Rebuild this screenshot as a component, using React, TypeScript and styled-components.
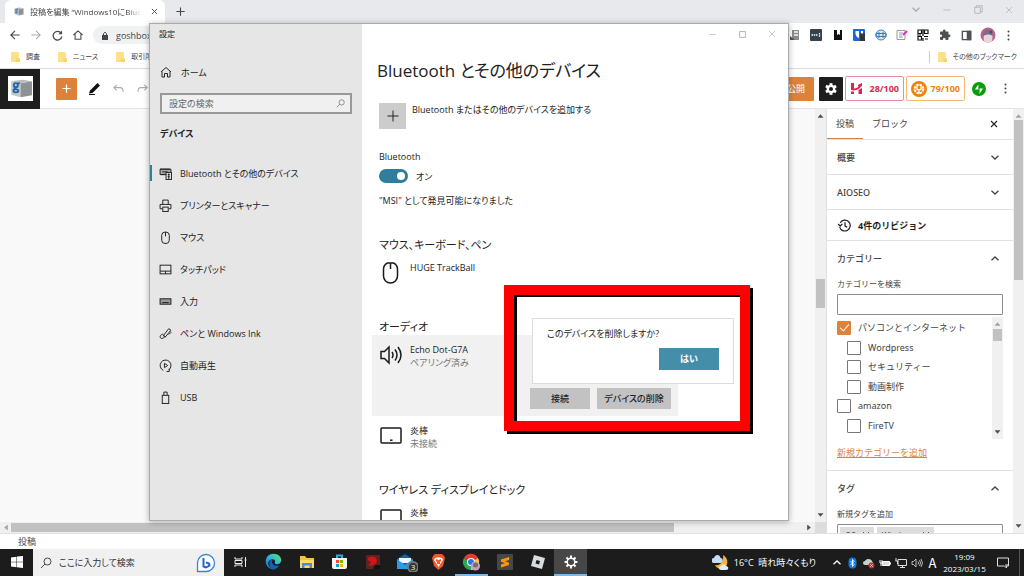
import React from "react";
import styled, { createGlobalStyle } from "styled-components";

const ui = '"Open Sans", "Noto Sans CJK JP", sans-serif';
const wp = '"Noto Sans", "Noto Sans CJK JP", sans-serif';

const Global = createGlobalStyle`
  *, *::before, *::after { box-sizing: border-box; }
  body { margin: 0; font-family: ${ui}; font-size: 9px; color: #222; overflow: hidden; }
  button, input { font: inherit; color: inherit; }
  button { border: 0; padding: 0; background: none; cursor: pointer; }
  h1, h2, p, ul { margin: 0; padding: 0; }
  ul { list-style: none; }
  svg { display: block; flex: none; }
`;

type IconProps = {
  w?: number;
  h?: number;
  box?: string;
  stroke?: string;
  sw?: number;
  fill?: string;
  children: React.ReactNode;
};
const Icon = ({ w = 12, h = w, box = "0 0 24 24", stroke = "currentColor", sw = 2, fill = "none", children }: IconProps) => (
  <svg width={w} height={h} viewBox={box} fill={fill} stroke={stroke} strokeWidth={sw} aria-hidden="true">
    {children}
  </svg>
);

/* ---------- page ---------- */

const Screen = styled.div`
  position: relative;
  display: flex;
  flex-direction: column;
  height: 100vh;
  background: #fff;
  overflow: hidden;
`;

/* ---------- browser chrome ---------- */

const TabStrip = styled.div`
  display: flex;
  align-items: center;
  height: 23px;
  flex: none;
  padding-left: 5px;
  background: #e7e9ed;
  color: #444;
`;
const Tab = styled.div`
  display: flex;
  align-items: center;
  gap: 6px;
  align-self: stretch;
  width: 160px;
  padding: 0 4px 0 8px;
  background: #fff;
  border-radius: 6px 6px 0 0;
`;
const TabTitle = styled.span`
  flex: 1;
  overflow: hidden;
  white-space: nowrap;
  font-size: 8px;
  line-height: 14px;
  font-feature-settings: "palt";
  mask-image: linear-gradient(90deg, #000 88%, transparent);
`;
const IconButton = styled.button<{ $dim?: boolean }>`
  display: flex;
  align-items: center;
  justify-content: center;
  width: 14px;
  height: 14px;
  flex: none;
  color: ${(p) => (p.$dim ? "#a8abaf" : "#45484c")};
`;
const NewTab = styled(IconButton)`
  margin-left: 8px;
`;
const BrowserCaption = styled.div`
  display: flex;
  gap: 17px;
  margin: 0 8px 4px auto;
`;
const Toolbar = styled.div`
  display: flex;
  align-items: center;
  height: 24px;
  flex: none;
  padding: 0 8px;
`;
const NavButtons = styled.div`
  display: flex;
  gap: 7px;
`;
const Address = styled.div`
  display: flex;
  align-items: center;
  gap: 7px;
  flex: 1;
  height: 18px;
  margin: 0 90px 0 8px;
  padding-left: 8px;
  border-radius: 9px;
  background: #eff1f3;
  color: #444;
`;
const AddressInput = styled.input`
  flex: 1;
  min-width: 0;
  padding: 0;
  border: 0;
  background: none;
`;
const Extensions = styled.div`
  display: flex;
  justify-content: space-between;
  width: 228px;
  flex: none;
`;
const Bookmarks = styled.div`
  display: flex;
  align-items: center;
  gap: 17px;
  height: 22px;
  flex: none;
  padding: 0 7px 2px 10px;
  border-bottom: 1px solid #dadce0;
`;
const Bookmark = styled.a<{ $end?: boolean }>`
  display: flex;
  align-items: center;
  gap: 6px;
  margin-left: ${(p) => (p.$end ? "auto" : "0")};
  padding-left: ${(p) => (p.$end ? "7px" : "0")};
  border-left: ${(p) => (p.$end ? "1px solid #ccc" : "0")};
  color: #444;
  font-size: 7px;
  line-height: 12px;
  text-decoration: none;
  white-space: nowrap;
  font-feature-settings: "palt";
`;

/* ---------- editor ---------- */

const EditorHeader = styled.header`
  display: flex;
  align-items: center;
  height: 40px;
  flex: none;
  border-bottom: 1px solid #e4e4e4;
  font-family: ${wp};
`;
const SiteLogo = styled.a`
  display: grid;
  place-items: center;
  width: 40px;
  height: 40px;
  background: #1e1e1e;
`;
const Tools = styled.div`
  display: flex;
  align-items: center;
  gap: 10px;
  margin-left: 16px;
`;
const AddBlock = styled.button`
  display: grid;
  place-items: center;
  width: 21px;
  height: 22px;
  border-radius: 1px;
  background: #dd823b;
  color: #fff;
`;
const Actions = styled.div`
  display: flex;
  align-items: center;
  gap: 2px;
  margin-left: auto;
  padding-right: 12px;
`;
const Publish = styled.button`
  width: 36px;
  height: 24px;
  margin-right: 3px;
  border-radius: 1px;
  background: #dd823b;
  color: #fff;
`;
const SettingsToggle = styled.button`
  display: grid;
  place-items: center;
  width: 24px;
  height: 24px;
  border-radius: 1px;
  background: #1e1e1e;
  color: #fff;
`;
const Score = styled.button<{ $tone: string; $line: string }>`
  display: flex;
  align-items: center;
  justify-content: space-between;
  width: 59px;
  height: 25px;
  padding: 0 4px;
  border: 1px solid ${(p) => p.$line};
  border-radius: 2px;
  color: ${(p) => p.$tone};
  font-family: "Open Sans", sans-serif;
  font-size: 9px;
  font-weight: 700;
`;
const Boost = styled(IconButton)`
  margin: 0 10px 0 5px;
`;

const EditorBody = styled.div`
  display: flex;
  flex: 1;
  min-height: 0;
`;
const CanvasColumn = styled.div`
  display: flex;
  flex-direction: column;
  flex: 1;
  min-width: 0;
`;
const Canvas = styled.main`
  flex: 1;
  background: #f9f9f9;
`;
const ScrollX = styled.div`
  display: flex;
  align-items: center;
  justify-content: space-between;
  height: 11px;
  background: #f0f0f0;
  padding: 0 3px;
`;
const ThumbX = styled.div`
  width: 82%;
  height: 9px;
  margin: 0 auto 0 2px;
  background: #c1c1c1;
`;
const ScrollY = styled.div`
  display: flex;
  flex-direction: column;
  align-items: center;
  width: 11px;
  flex: none;
  padding: 4px 0;
  background: #f0f0f0;
`;
const ThumbY = styled.div<{ $before: number; $size: number; $after: number }>`
  display: flex;
  flex: 1;
  flex-direction: column;
  width: 9px;
  min-height: 0;
  &::before { content: ""; flex: ${(p) => p.$before}; }
  &::after { content: ""; flex: ${(p) => p.$after}; }
  & > span { flex: ${(p) => p.$size}; background: #c1c1c1; }
`;
const ScrollColumn = styled.div`
  display: flex;
  flex-direction: column;
  background: #dcdcdc;
  padding-bottom: 11px;
  & > div { flex: 1; }
`;
const Arrow = styled.span<{ $dir: "up" | "down" | "left" | "right"; $dim?: boolean }>`
  width: 6px;
  height: 6px;
  flex: none;
  background: ${(p) => (p.$dim ? "#a3a3a3" : "#505050")};
  clip-path: ${(p) =>
    ({
      up: "polygon(0 80%, 50% 20%, 100% 80%)",
      down: "polygon(0 20%, 50% 80%, 100% 20%)",
      left: "polygon(80% 0, 20% 50%, 80% 100%)",
      right: "polygon(20% 0, 80% 50%, 20% 100%)",
    })[p.$dir]};
`;

const Inspector = styled.aside`
  width: 187px;
  flex: none;
  overflow: hidden;
  border-left: 1px solid #e0e0e0;
  background: #fff;
  color: #444;
  font-family: ${wp};
`;
const InspectorTabs = styled.div`
  display: flex;
  height: 31px;
  padding-right: 12px;
  border-bottom: 1px solid #e0e0e0;
  align-items: stretch;
`;
const InspectorTab = styled.button<{ $on?: boolean }>`
  padding: 0 9px;
  border-bottom: 1px solid ${(p) => (p.$on ? "#dd823b" : "transparent")};
  font-size: 9px;
`;
const CloseInspector = styled(IconButton)`
  margin: auto 0 auto auto;
  color: #1e1e1e;
`;
const Panel = styled.section`
  border-bottom: 1px solid #e0e0e0;
`;
const PanelHead = styled.button<{ $short?: boolean }>`
  display: flex;
  align-items: center;
  justify-content: space-between;
  width: 100%;
  height: ${(p) => (p.$short ? 30 : 34)}px;
  padding: 0 14px 0 10px;
  font-size: 9px;
  font-weight: 500;
`;
const Revisions = styled(PanelHead)`
  justify-content: flex-start;
  gap: 7px;
  padding-left: 11px;
  color: #1e1e1e;
  font-weight: 700;
`;
const FieldLabel = styled.label`
  display: block;
  padding: 2px 10px 3px;
  font-size: 8px;
  line-height: 14px;
`;
const SearchField = styled.input`
  display: block;
  width: calc(100% - 20px);
  height: 21px;
  margin-left: 10px;
  padding: 0 6px;
  border: 1px solid #8c8c8c;
  border-radius: 1px;
`;
const CategoryBox = styled.div`
  display: flex;
  height: 122px;
  margin: 2px 10px 0;
`;
const CategoryList = styled.ul`
  display: flex;
  flex: 1;
  flex-direction: column;
  justify-content: space-between;
  padding: 4px 0 6px;
`;
const CategoryItem = styled.li<{ $child?: boolean }>`
  padding-left: ${(p) => (p.$child ? 10 : 0)}px;
`;
const CheckLabel = styled.label`
  display: flex;
  align-items: center;
  gap: 7px;
  height: 14px;
  font-size: 9px;
  line-height: 14px;
  white-space: nowrap;
`;
const Check = styled.input`
  appearance: none;
  width: 14px;
  height: 14px;
  margin: 0;
  border: 1px solid #777;
  border-radius: 1px;
  background: #fff;
  &:checked { border-color: #dd823b; background: #dd823b; }
  &:checked::after {
    content: "";
    display: block;
    width: 5px;
    height: 9px;
    margin: 0 0 0 4px;
    border: solid #fff;
    border-width: 0 1px 1px 0;
    transform: rotate(40deg);
  }
`;
const AddCategory = styled.a`
  display: inline-block;
  margin: 7px 10px 10px;
  color: #dd823b;
  font-size: 9px;
  line-height: 14px;
`;
const TagField = styled.div`
  display: flex;
  gap: 3px;
  height: 30px;
  margin: 0 10px;
  padding: 2px;
  border: 1px solid #8c8c8c;
  border-radius: 1px;
`;
const Tag = styled.span`
  display: flex;
  align-items: center;
  gap: 6px;
  height: 16px;
  padding: 0 4px 0 5px;
  background: #ddd;
  font-size: 8px;
`;
const EditorFooter = styled.footer`
  height: 16px;
  flex: none;
  padding-left: 18px;
  border-top: 1px solid #e0e0e0;
  font-size: 9px;
  line-height: 15px;
  color: #444;
`;

/* ---------- settings window ---------- */

const Window = styled.section`
  position: absolute;
  top: 23px;
  left: 149px;
  display: flex;
  width: 640px;
  height: 498px;
  border: 1px solid #a9abad;
  background: #fff;
  box-shadow: 0 1px 6px rgba(0, 0, 0, 0.3);
  font-feature-settings: "palt";
  overflow: hidden;
`;
const SideNav = styled.nav`
  width: 212px;
  flex: none;
  background: #e6e6e6;
`;
const WindowName = styled.p`
  height: 20px;
  padding-left: 9px;
  font-size: 8px;
  line-height: 20px;
`;
const HomeLink = styled.a`
  display: flex;
  align-items: center;
  gap: 9px;
  height: 20px;
  margin: 18px 0 11px;
  padding-left: 10px;
  color: #222;
  text-decoration: none;
`;
const SettingSearch = styled.label`
  display: flex;
  align-items: center;
  height: 21px;
  margin: 0 10px;
  padding: 0 5px 0 7px;
  border: 2px solid #999;
  background: #f0f0f0;
  color: #666;
  input {
    flex: 1;
    min-width: 0;
    padding: 0;
    border: 0;
    background: none;
    font-feature-settings: inherit;
  }
  input::placeholder { color: #666; opacity: 1; }
`;
const NavTitle = styled.h2`
  margin: 12px 0 15px;
  padding-left: 10px;
  font-size: 9px;
  line-height: 16px;
  font-weight: 700;
`;
const NavItem = styled.a<{ $on?: boolean }>`
  display: flex;
  align-items: center;
  gap: 8px;
  height: 32px;
  padding-left: 9px;
  color: #222;
  text-decoration: none;
  white-space: nowrap;
  background: linear-gradient(${(p) => (p.$on ? "#2f809d, #2f809d" : "transparent, transparent")}) 0 50% / 2px 16px no-repeat;
`;
const Content = styled.div`
  flex: 1;
  min-width: 0;
`;
const CaptionBar = styled.div`
  display: flex;
  justify-content: flex-end;
  align-items: center;
  gap: 16px;
  height: 20px;
  padding-right: 9px;
`;
const Title = styled.h1`
  margin: 14px 0 19px 15px;
  font-size: 17px;
  line-height: 26px;
  font-weight: 400;
`;
const AddDevice = styled.button`
  display: flex;
  gap: 6px;
  margin: 0 0 20px 17px;
  line-height: 14px;
  font-feature-settings: inherit;
`;
const PlusTile = styled.span`
  display: grid;
  place-items: center;
  width: 27px;
  height: 26px;
  background: #ccc;
`;
const Line = styled.p`
  margin-left: 17px;
  line-height: 16px;
`;
const ToggleLabel = styled.label`
  display: flex;
  align-items: center;
  gap: 8px;
  height: 14px;
  margin: 4px 0 10px 17px;
`;
const Toggle = styled.input`
  appearance: none;
  width: 29px;
  height: 14px;
  margin: 0;
  padding: 3px;
  border-radius: 7px;
  background: #2f7e9b;
  &::after {
    content: "";
    display: block;
    width: 8px;
    height: 8px;
    margin-left: auto;
    border-radius: 50%;
    background: #fff;
  }
`;
const GroupTitle = styled.h2`
  margin: 28px 0 0 17px;
  font-size: 11px;
  line-height: 16px;
  font-weight: 400;
`;
const Device = styled.div<{ $open?: boolean }>`
  display: flex;
  position: relative;
  flex-wrap: wrap;
  align-content: flex-start;
  gap: 0 8px;
  width: 306px;
  min-height: ${(p) => (p.$open ? 81 : 38)}px;
  margin-left: 10px;
  padding: 8px 7px 0 8px;
  background: ${(p) => (p.$open ? "#f1f1f1" : "transparent")};
`;
const DeviceIcon = styled.span`
  padding-top: 1px;
  color: #1a1a1a;
`;
const DeviceName = styled.p`
  line-height: 14px;
`;
const DeviceState = styled.p`
  line-height: 12px;
  color: #777;
`;
const DeviceActions = styled.div`
  display: flex;
  justify-content: flex-end;
  gap: 7px;
  width: 100%;
  margin-top: 19px;
`;
const Action = styled.button<{ $wide?: boolean; $primary?: boolean }>`
  width: ${(p) => (p.$wide ? 74 : 60)}px;
  height: ${(p) => (p.$primary ? 22 : 21)}px;
  background: ${(p) => (p.$primary ? "#458eaa" : "#c2c2c2")};
  color: ${(p) => (p.$primary ? "#fff" : "#222")};
  font-weight: ${(p) => (p.$primary ? 700 : 500)};
  font-feature-settings: inherit;
`;
const Confirm = styled.div`
  position: absolute;
  z-index: 1;
  right: -56px;
  bottom: 32px;
  display: flex;
  flex-direction: column;
  justify-content: space-between;
  width: 202px;
  height: 66px;
  padding: 7px 14px 13px;
  border: 1px solid #dcdcdc;
  background: #fff;
  line-height: 16px;
  & > button { align-self: flex-end; }
`;
const Highlight = styled.div`
  position: absolute;
  top: 285px;
  left: 504px;
  width: 246px;
  height: 146px;
  border: 10px solid #f00;
  box-shadow: 3px 3px 0 #000, inset 3px 2px 0 #000;
  pointer-events: none;
`;

/* ---------- taskbar ---------- */

const Taskbar = styled.footer`
  display: flex;
  align-items: stretch;
  height: 27px;
  flex: none;
  background: #1c1c1c;
  color: #fff;
`;
const TaskButton = styled.button<{ $active?: boolean; $running?: boolean }>`
  display: grid;
  place-items: center;
  width: 33px;
  background: ${(p) => (p.$active ? "#474747" : "transparent")};
  border-bottom: 2px solid ${(p) => (p.$active || p.$running ? "#76b9ed" : "transparent")};
  color: #eee;
`;
const TaskSearch = styled.label`
  display: flex;
  align-items: center;
  gap: 7px;
  width: 191px;
  padding: 0 8px 0 7px;
  background: #f0f0f0;
  color: #333;
  input {
    flex: 1;
    min-width: 0;
    padding: 0;
    border: 0;
    background: none;
    font-feature-settings: "palt";
  }
  input::placeholder { color: #333; opacity: 1; }
`;
const Tray = styled.div`
  display: flex;
  align-items: center;
  margin-left: auto;
  padding-right: 4px;
`;
const Weather = styled.button`
  display: flex;
  align-items: center;
  gap: 5px;
  margin-right: 14px;
  color: #fff;
  font-feature-settings: "palt";
  white-space: pre;
`;
const TrayIcons = styled.div`
  display: flex;
  gap: 3px;
  align-items: center;
`;
const TrayIcon = styled.span`
  display: grid;
  place-items: center;
  width: 13px;
  font-family: "Noto Sans CJK JP", sans-serif;
  font-size: 13px;
  line-height: 14px;
`;
const Clock = styled.div`
  width: 51px;
  font-size: 8px;
  line-height: 12px;
  text-align: center;
`;
const Notice = styled.button`
  display: flex;
  align-items: center;
  align-self: stretch;
  padding: 0 10px 0 7px;
  border-right: 1px solid #555;
  color: #ddd;
`;

/* ---------- drawings ---------- */

const Folder = () => (
  <Icon w={10} h={11} box="0 0 10 11" stroke="none">
    <path d="M1 1h7l1 1v9H1z" fill="#fde08a" />
    <path d="M6 7.500h4V11H6z" fill="#f8d564" />
  </Icon>
);
const Cross = ({ size = 8, sw = 2.5 }: { size?: number; sw?: number }) => (
  <Icon w={size} sw={sw}><path d="M3 3l18 18M21 3L3 21" /></Icon>
);
const Chevron = ({ up }: { up?: boolean }) => (
  <Icon w={8} h={5} box="0 0 8 5" sw={1.3}><path d={up ? "M0.5 4.2L4 1l3.5 3.2" : "M0.5.8L4 4 7.500.8"} /></Icon>
);
const BoxLogo = ({ size = 12 }: { size?: number }) => (
  <Icon w={size} box="0 0 24 24" stroke="none">
    <path d="M0 0h24v24H0z" fill="#fff" />
    <path d="M3 5l9 2v13.500L3 18z" fill="#c5c8ca" />
    <path d="M12 7l11-2v13.500l-11 2z" fill="#8f9294" />
    <path d="M3 5l11-1.500L23 5l-11 2z" fill="#b9bbbd" />
    <g stroke="#2465a8" strokeWidth="1.800" fill="none"><circle cx="7.500" cy="8.800" r="2" /><path d="M9.500 7h1.800M6.500 11.200c-1.500 1.500 3.500 1 3.500 3s-4.800 2-4.800 0S7.500 12.800 8 12.800" /></g>
  </Icon>
);
const Magnifier = ({ size = 9 }: { size?: number }) => (
  <Icon w={size} sw={1.8}><circle cx="15" cy="9" r="7" /><path d="M10 14L2 22" /></Icon>
);
const Dots = () => (
  <Icon w={3} h={11} box="0 0 3 11" stroke="none" fill="#444"><circle cx="1.500" cy="1.500" r="1" /><circle cx="1.500" cy="5.500" r="1" /><circle cx="1.500" cy="9.500" r="1" /></Icon>
);
const Gear = ({ size = 14, hole = "#1e1e1e" }: { size?: number; hole?: string }) => (
  <Icon w={size} stroke="none" fill="#fff">
    {[0, 60, 120].map((a) => <rect key={a} x="9.500" y="2" width="5" height="20" transform={`rotate(${a} 12 12)`} />)}
    <circle cx="12" cy="12" r="7.500" />
    <circle cx="12" cy="12" r="3.500" fill={hole} />
  </Icon>
);
const WinGear = () => (
  <Icon w={14} stroke="#fff">
    {[0, 45, 90, 135].map((a) => <path key={a} strokeWidth="3.500" d="M12 1v5M12 18v5" transform={`rotate(${a} 12 12)`} />)}
    <circle cx="12" cy="12" r="6.500" strokeWidth="2.500" />
  </Icon>
);
const Tablet = () => (
  <Icon w={22} box="0 0 22 22" sw={1.5}><rect x="1" y="3" width="20" height="15" rx="1" /><path d="M10 15.200h2.500" /></Icon>
);
const MouseBig = () => (
  <Icon w={22} box="0 0 22 22" sw={1.5}><path d="M3.500 7.500a7 7 0 0 1 4-6.500h6a7 7 0 0 1 4 6.500V14a7 7 0 0 1-14 0z" /><path d="M10.500 1v6" /></Icon>
);
const Speaker = () => (
  <Icon w={22} box="0 0 22 22" sw={1.5}><path d="M1 7.500h3.500L9 3v16l-4.500-4.500H1z" /><path d="M12 8q2 3 0 6M15 5.500q4 5.500 0 11M18 3q6 8 0 16" /></Icon>
);

const navIcons: Record<string, React.ReactNode> = {
  devices: <><path d="M1 2h10v5H1z" fill="#aaa" /><path d="M1 2h9M3 4.500h5M2 7h4" /><rect x="6.500" y="5" width="5" height="6.500" fill="#e6e6e6" /><path d="M8 7h2M8 9h2M9 6v5" /></>,
  printer: <><path d="M3.500 5V1h5v4M3 9H1V5h10v4H9" /><rect x="3.500" y="7.500" width="5" height="4" /></>,
  mouse: <><rect x="2.500" y="1" width="7" height="10.500" rx="3" /><path d="M6 1v4" /></>,
  touchpad: <><rect x="1" y="2" width="10" height="8" /><path d="M1 7.500h10M6 7.500V10" /></>,
  keyboard: <><rect x="1" y="3.500" width="10" height="5" fill="#999" /><path d="M3 7h6" /></>,
  pen: <><path d="M4 8L9 1.500l2 1.500-5 6zM4 8l2 1M10 4l1 1-2 2" /><path d="M4 6.500C0 7 .5 11 3 10.500s2-2 3-1.500" /></>,
  autoplay: <><path d="M4 10.500A5 5 0 1 1 9 10M7 11.500h2.500V9" /><path d="M5 4l3 2-3 2z" /></>,
  usb: <><path d="M4.500 4V1h3v3" /><rect x="3" y="4" width="6" height="7.500" /></>,
};
const navItems = [
  ["devices", "Bluetooth とその他のデバイス"],
  ["printer", "プリンターとスキャナー"],
  ["mouse", "マウス"],
  ["touchpad", "タッチパッド"],
  ["keyboard", "入力"],
  ["pen", "ペンと Windows Ink"],
  ["autoplay", "自動再生"],
  ["usb", "USB"],
];
const categories = [
  { name: "パソコンとインターネット", checked: true },
  { name: "Wordpress", child: true },
  { name: "セキュリティー", child: true },
  { name: "動画制作", child: true },
  { name: "amazon" },
  { name: "FireTV", child: true },
];

const extensionIcons: [string, React.ReactNode][] = [
  ["ノート", <Icon w={12} box="0 0 12 12" stroke="none"><path d="M3 1h7v10H3z" fill="#8a8a8a" /><path d="M5 3h4M5 6h4" stroke="#ddd" /><path d="M1 7l5 4H1z" fill="#555" /></Icon>],
  ["パスワード", <Icon w={12} box="0 0 12 12" stroke="none"><rect width="12" height="12" rx="1" fill="#32424f" /><path d="M1.500 6h6.500M9.500 4v4" stroke="#fff" strokeWidth="1.300" strokeDasharray="1.500 .7" /></Icon>],
  ["保存", <Icon w={10} box="0 0 10 10" stroke="none"><path d="M1 0h3v5l1.500-1L7 5V0h2v10H1z" fill="#111" /></Icon>],
  ["マップ", <Icon w={12} box="0 0 12 12" stroke="none"><rect width="12" height="12" rx="1" fill="#1b66dc" /><path d="M2.500 2H6v7Q3 8 2.500 5z" fill="#fff" /><path d="M8 2h2v3H8z" fill="#fff" /><path d="M7 7h5v5H7z" fill="#333" /><path d="M8 7V5.500h3V7" stroke="#333" /></Icon>],
  ["翻訳", <Icon w={12} box="0 0 12 12" sw={1}><circle cx="6" cy="6" r="5" fill="#d8e8f3" stroke="#3c7fb4" /><path d="M1 4.500h10v3H1zM4 3v6M8 3v6" stroke="#3c7fb4" /></Icon>],
  ["メモ", <Icon w={12} box="0 0 12 12" sw={1}><path d="M1 1.500h8v9H1zM3 4h4M3 6h3M3 8h4" stroke="#999" /><path d="M7 6l4-4" stroke="#e42cd3" strokeWidth="2" /></Icon>],
  ["QR", <Icon w={12} box="0 0 12 12" sw={1.2} stroke="#111"><path d="M1 1h3.500v3.500H1zM7.500 1H11v3.500H7.500zM1 7.500h3.500V11H1zM6 0v7M6 9v3M7 7.500h4M8 10h3M0 6h4" /></Icon>],
  ["拡張機能", <Icon w={12} stroke="none" fill="#4d5156"><path d="M20.500 11H19V7a2 2 0 0 0-2-2h-4V3.500a2.500 2.500 0 0 0-5 0V5H4a2 2 0 0 0-2 2v3.800h1.500a2.700 2.700 0 0 1 0 5.400H2V20a2 2 0 0 0 2 2h3.800v-1.500a2.700 2.700 0 0 1 5.400 0V22H17a2 2 0 0 0 2-2v-4h1.500a2.500 2.500 0 0 0 0-5z" /></Icon>],
  ["サイドパネル", <Icon w={11} box="0 0 12 12" sw={1.5} stroke="#4d5156"><path d="M1.500 1.500h9v9h-9z" /><path d="M7 1.500h3.500v9H7z" fill="#4d5156" /></Icon>],
  ["プロフィール", <Icon w={16} box="0 0 16 16" stroke="none"><circle cx="8" cy="8" r="7.500" fill="#c65c8c" /><path d="M4 14c-1-5 0-10 5-11 4 1 4 5 3 11-2 2-6 2-8 0z" fill="#e5d5dc" /><path d="M3 9c0-9 10-9 10 0-3-2-6-2-10 0z" fill="#75707c" /><circle cx="11" cy="5" r="1.500" fill="#4a3f93" /></Icon>],
  ["メニュー", <Dots />],
];

const taskIcons: { name: string; running?: boolean; active?: boolean; icon: React.ReactNode }[] = [
  { name: "タスクビュー", icon: <Icon w={14} box="0 0 14 14" sw={1}><path d="M1 2v2h7V2M1 12v-2h7v2M1 5.500h7v3H1zM11.500 2v10M10.500 5h2" /></Icon> },
  { name: "Edge", icon: <Icon w={17} stroke="none"><defs><linearGradient id="eg" x1="0" x2="1" y1="1" y2="0"><stop offset="0" stopColor="#0c6cc4" /><stop offset=".5" stopColor="#2bb6e3" /><stop offset="1" stopColor="#67df58" /></linearGradient></defs><path d="M1 12C1 5 6 1 12 1s11 4 11 9c0 4-3 6-6 6-2 0-4-1-3-3 1-3-2-5-5-4-4 1-6 5-3 10 2 3 6 4 9 4C7 24 1 19 1 12z" fill="url(#eg)" /><path d="M6 15c0-4 2-6 5-6-3 5 1 10 9 9-2 3-5 5-8 5-4-1-6-4-6-8z" fill="#1461b5" /></Icon> },
  { name: "エクスプローラー", icon: <Icon w={16} h={14} box="0 0 16 14" stroke="none"><path d="M1 1h5l1.500 2H15v10H1z" fill="#f6c344" /><path d="M1 5h14v8H1z" fill="#ffd968" /><path d="M3 8h10v5h-2.500v-2.500h-5V13H3z" fill="#3f93dc" /></Icon> },
  { name: "ストア", icon: <Icon w={15} box="0 0 15 15" stroke="none"><path d="M5 4V1.500h5V4" stroke="#31a8e0" /><path d="M0 4h15v9q0 2-2 2H2q-2 0-2-2z" fill="#f5f5f5" /><path d="M4 6h3v3H4z" fill="#f05021" /><path d="M8 6h3v3H8z" fill="#7db900" /><path d="M4 10h3v3H4z" fill="#00a2ed" /><path d="M8 10h3v3H8z" fill="#fbb800" /></Icon> },
  { name: "Dragon", icon: <Icon w={14} box="0 0 14 14" stroke="none"><rect width="14" height="14" rx="1" fill="#5a2422" /><path d="M2 3q4-3 8 0 2 4-1 6-4 3-7 1 3-1 3-3L2 5z" fill="#d61414" /><path d="M9 10h5v4H7z" fill="#141414" /></Icon> },
  { name: "メール", icon: <Icon w={24} h={20} box="0 0 24 20" stroke="none"><path d="M3 7l8-5 8 5v10H3z" fill="#0f5ea8" /><path d="M5 6h12v5H5z" fill="#eef5fb" /><path d="M3 7l8 6 8-6v10H3z" fill="#2c9de4" /><circle cx="19" cy="15" r="5" fill="#333" stroke="#777" /><text x="19" y="18" fill="#fff" fontSize="8" textAnchor="middle">3</text></Icon> },
  { name: "Brave", icon: <Icon w={15} h={16} box="0 0 15 16" stroke="none"><path d="M4 0h7l2 2 1 2-2 8-4.500 4L3 12 1 4l1-2z" fill="#f4552a" /><path d="M4 4l3.500-.7L11 4l1 2-2 3-2.500 4L5 9 3 6z" fill="#fff" /><path d="M5 6l2 1v3M10 6L8 7v3" stroke="#f4552a" /></Icon> },
  { name: "Chrome", running: true, icon: <Icon w={19} h={18} box="0 0 19 18" stroke="none"><path d="M9 9L2 5a8 8 0 0 1 14 0z" fill="#e33b2e" /><path d="M9 9V17A8 8 0 0 1 2 5z" fill="#2da94f" /><path d="M9 9l7-4a8 8 0 0 1-7 12z" fill="#fcc934" /><circle cx="9" cy="9" r="4" fill="#fff" /><circle cx="9" cy="9" r="3" fill="#2b78e4" /><circle cx="13.500" cy="13" r="4.500" fill="#c8a0b4" /><circle cx="13.500" cy="12" r="2.500" fill="#746a78" /></Icon> },
  { name: "Sublime Text", icon: <Icon w={16} box="0 0 16 16" stroke="none"><rect width="16" height="16" rx="1" fill="#474747" /><path d="M4 5.500L12 3v3L8 7.300l4 1.500V11L4 13.500v-3L8 9 4 7.800z" fill="#ff9800" /></Icon> },
  { name: "Roblox", icon: <Icon w={16} box="0 0 16 16" stroke="none"><path d="M4 1l11 3-3 11L1 12z" fill="#d7dce0" /><path d="M6.500 6l3.500 1-1 3.500-3.500-1z" fill="#1c1c1c" /></Icon> },
  { name: "設定", active: true, icon: <WinGear /> },
];

/* ---------- parts ---------- */

const Browser = () => (
  <>
    <TabStrip>
      <Tab>
        <BoxLogo size={11} />
        <TabTitle>投稿を編集 “Windows10にBluetooth</TabTitle>
        <IconButton aria-label="タブを閉じる"><Cross size={7} sw={3} /></IconButton>
      </Tab>
      <NewTab aria-label="新しいタブ"><Icon w={9} sw={3}><path d="M12 1v22M1 12h22" /></Icon></NewTab>
      <BrowserCaption>
        <IconButton $dim aria-label="タブを検索"><Chevron /></IconButton>
        <IconButton $dim aria-label="最小化"><Icon w={8}><path d="M1 12h22" /></Icon></IconButton>
        <IconButton $dim aria-label="元に戻す"><Icon w={9}><path d="M2 6h15v16H2zM6 6V2h16v16h-5" /></Icon></IconButton>
        <IconButton $dim aria-label="閉じる"><Cross sw={2} /></IconButton>
      </BrowserCaption>
    </TabStrip>
    <Toolbar>
      <NavButtons>
        <IconButton aria-label="戻る"><Icon w={10} sw={2.8}><path d="M23 12H3M12 2L2 12l10 10" /></Icon></IconButton>
        <IconButton $dim aria-label="進む"><Icon w={10} sw={2.5}><path d="M1 12h20M12 2l10 10-10 10" /></Icon></IconButton>
        <IconButton aria-label="再読み込み"><Icon w={11} sw={2.8}><path d="M20 7a9.500 9.500 0 1 0 1.500 7" /><path d="M22 1v8h-8z" fill="currentColor" stroke="none" /></Icon></IconButton>
        <IconButton aria-label="ホーム"><Icon w={10} sw={2.5}><path d="M1 12L12 2l11 10M5 10v12h14V10" /></Icon></IconButton>
      </NavButtons>
      <Address>
        <Icon w={8} h={9} box="0 0 8 9"><rect x="1" y="4" width="6" height="5" fill="#444" stroke="none" /><path d="M2.500 4V2.500q1.500-2.500 3 0V4" strokeWidth="1" /></Icon>
        <AddressInput aria-label="アドレス" defaultValue="goshbox.com" />
      </Address>
      <Extensions>
        {extensionIcons.map(([name, icon]) => <IconButton key={name} aria-label={name}>{icon}</IconButton>)}
      </Extensions>
    </Toolbar>
    <Bookmarks>
      {["調査", "ニュース", "取引所"].map((b) => <Bookmark key={b} href="#"><Folder />{b}</Bookmark>)}
      <Bookmark href="#" $end><Folder />その他のブックマーク</Bookmark>
    </Bookmarks>
  </>
);

const Editor = () => (
  <>
    <EditorHeader>
      <SiteLogo href="#" aria-label="投稿を表示"><BoxLogo size={25} /></SiteLogo>
      <Tools>
        <AddBlock aria-label="ブロックを追加"><Icon w={9} sw={3.2}><path d="M12 1v22M1 12h22" /></Icon></AddBlock>
        <IconButton aria-label="ツール"><Icon w={13} box="0 0 13 13" stroke="none" fill="#111"><path d="M2 8.500L9.500 1 12 3.500 4.500 11 1 11.500zM1 12h6v1H1z" /></Icon></IconButton>
        <IconButton $dim aria-label="元に戻す"><Icon w={11} sw={2.4}><path d="M8 4L2 10l6 6M2 10h14q6 0 6 9" /></Icon></IconButton>
        <IconButton $dim aria-label="やり直す"><Icon w={11} sw={2.4}><path d="M16 4l6 6-6 6M22 10H8q-6 0-6 9" /></Icon></IconButton>
      </Tools>
      <Actions>
        <Publish>公開</Publish>
        <SettingsToggle aria-label="設定"><Gear /></SettingsToggle>
        <Score $tone="#dc2550" $line="#ee8ba0">
          <Icon w={13} box="0 0 13 13" stroke="none" fill="#dc2550"><path d="M1 1h3v5.500q4-.5 4.500-2.500L7.500 3 12 1v3l-1 .5Q9 8 4 8.500L1 8zM1 9.500h3V12H1zM8.500 8L12 6v6H8.500z" /></Icon>28/100
        </Score>
        <Score $tone="#ef8208" $line="#f5b96e">
          <Icon w={16} stroke="none"><circle cx="12" cy="12" r="12" fill="#ef8208" /><circle cx="12" cy="12" r="6.500" stroke="#fff" strokeWidth="3" strokeDasharray="3.800 1.300" /><path d="M9 8v5h6V8M12 13v6" stroke="#fff" strokeWidth="2" /></Icon>79/100
        </Score>
        <Boost aria-label="Jetpack"><Icon w={14} stroke="none"><circle cx="12" cy="12" r="12" fill="#069e08" /><path d="M11 4v9H5zM13 20v-9h6z" fill="#fff" /></Icon></Boost>
        <IconButton aria-label="オプション"><Dots /></IconButton>
      </Actions>
    </EditorHeader>
    <EditorBody>
      <CanvasColumn>
        <Canvas />
        <ScrollX><Arrow $dir="left" $dim /><ThumbX /><Arrow $dir="right" /></ScrollX>
      </CanvasColumn>
      <ScrollColumn>
        <ScrollY><Arrow $dir="up" /><ThumbY $before={160} $size={29} $after={204}><span /></ThumbY><Arrow $dir="down" /></ScrollY>
      </ScrollColumn>
      <Inspector>
        <InspectorTabs>
          <InspectorTab $on>投稿</InspectorTab>
          <InspectorTab>ブロック</InspectorTab>
          <CloseInspector aria-label="設定を閉じる"><Cross sw={3.2} /></CloseInspector>
        </InspectorTabs>
        <Panel><PanelHead>概要<Chevron /></PanelHead></Panel>
        <Panel><PanelHead>AIOSEO<Chevron /></PanelHead></Panel>
        <Panel>
          <Revisions $short><Icon w={13} sw={2.2}><path d="M4 7a10 10 0 1 1-1 8M0 9l4 4 4-4M13 6v7l4 2" /></Icon>4件のリビジョン</Revisions>
        </Panel>
        <Panel>
          <PanelHead>カテゴリー<Chevron up /></PanelHead>
          <FieldLabel htmlFor="cat-search">カテゴリーを検索</FieldLabel>
          <SearchField id="cat-search" />
          <CategoryBox>
            <CategoryList>
              {categories.map((c) => (
                <CategoryItem key={c.name} $child={c.child}>
                  <CheckLabel><Check type="checkbox" defaultChecked={c.checked} />{c.name}</CheckLabel>
                </CategoryItem>
              ))}
            </CategoryList>
            <ScrollY><Arrow $dir="up" $dim /><ThumbY $before={2} $size={12} $after={87}><span /></ThumbY><Arrow $dir="down" /></ScrollY>
          </CategoryBox>
          <AddCategory href="#">新規カテゴリーを追加</AddCategory>
        </Panel>
        <PanelHead>タグ<Chevron up /></PanelHead>
        <FieldLabel as="p">新規タグを追加</FieldLabel>
        <TagField><Tag>OS <Cross /></Tag><Tag>Windows <Cross /></Tag></TagField>
      </Inspector>
      <ScrollY><Arrow $dir="up" $dim /><ThumbY $before={1} $size={160} $after={243}><span /></ThumbY><Arrow $dir="down" /></ScrollY>
    </EditorBody>
    <EditorFooter>投稿</EditorFooter>
  </>
);

const SettingsWindow = () => (
  <Window aria-label="設定">
    <SideNav>
      <WindowName>設定</WindowName>
      <HomeLink href="#"><Icon w={12} box="0 0 12 12" sw={1}><path d="M1 6l5-4.500L11 6M2 5.500V11h2.500V7.500h3V11H10V5.500" /></Icon>ホーム</HomeLink>
      <SettingSearch><input aria-label="設定の検索" placeholder="設定の検索" /><Magnifier /></SettingSearch>
      <NavTitle>デバイス</NavTitle>
      {navItems.map(([icon, name], i) => (
        <NavItem key={name} href="#" $on={i === 0}><Icon w={13} box="0 0 12 12" sw={0.9}>{navIcons[icon]}</Icon>{name}</NavItem>
      ))}
    </SideNav>
    <Content>
      <CaptionBar>
        <IconButton $dim aria-label="最小化"><Icon w={7}><path d="M1 12h22" /></Icon></IconButton>
        <IconButton $dim aria-label="最大化"><Icon w={7} sw={3}><path d="M2 2h20v20H2z" /></Icon></IconButton>
        <IconButton $dim aria-label="閉じる"><Cross size={8} sw={2} /></IconButton>
      </CaptionBar>
      <Title>Bluetooth とその他のデバイス</Title>
      <AddDevice>
        <PlusTile><Icon w={12} box="0 0 12 12" sw={1}><path d="M6 .5v11M.5 6h11" /></Icon></PlusTile>
        Bluetooth またはその他のデバイスを追加する
      </AddDevice>
      <Line>Bluetooth</Line>
      <ToggleLabel><Toggle type="checkbox" role="switch" defaultChecked />オン</ToggleLabel>
      <Line>"MSI" として発見可能になりました</Line>
      <GroupTitle>マウス、キーボード、ペン</GroupTitle>
      <Device>
        <DeviceIcon><MouseBig /></DeviceIcon>
        <DeviceName>HUGE TrackBall</DeviceName>
      </Device>
      <GroupTitle>オーディオ</GroupTitle>
      <Device $open>
        <DeviceIcon><Speaker /></DeviceIcon>
        <div><DeviceName>Echo Dot-G7A</DeviceName><DeviceState>ペアリング済み</DeviceState></div>
        <DeviceActions><Action>接続</Action><Action $wide>デバイスの削除</Action></DeviceActions>
        <Confirm role="dialog"><p>このデバイスを削除しますか?</p><Action $primary>はい</Action></Confirm>
      </Device>
      <Device>
        <DeviceIcon><Tablet /></DeviceIcon>
        <div><DeviceName>炎棒</DeviceName><DeviceState>未接続</DeviceState></div>
      </Device>
      <GroupTitle>ワイヤレス ディスプレイとドック</GroupTitle>
      <Device>
        <DeviceIcon><Tablet /></DeviceIcon>
        <DeviceName>炎棒</DeviceName>
      </Device>
    </Content>
  </Window>
);

const SystemBar = () => (
  <Taskbar>
    <TaskButton aria-label="スタート"><Icon w={12} box="0 0 12 12" stroke="none" fill="#fff"><path d="M0 1.500l5.500-.8v5H0zM6 .6L12 0v5.700H6zM0 6.300h5.500v5L0 10.500zM6 6.300h6V12l-6-.8z" /></Icon></TaskButton>
    <TaskSearch>
      <Magnifier size={12} />
      <input aria-label="検索" placeholder="ここに入力して検索" />
      <Icon w={20} box="0 0 20 20" sw={1.3} stroke="#2e88dd"><path d="M1.500 18.500V10a8.500 8.500 0 1 1 8.500 8.500z" fill="#fff" /><path d="M7.500 5v8.500l2.500 1 3.500-2-.5-2-3-1" stroke="#1a66d0" strokeWidth="2" /></Icon>
    </TaskSearch>
    {taskIcons.map((t) => <TaskButton key={t.name} aria-label={t.name} $active={t.active} $running={t.running}>{t.icon}</TaskButton>)}
    <Tray>
      <Weather>
        <Icon w={17} box="0 0 17 17" stroke="none"><path d="M11 1c6 3 6 12-1 14-4 0-6-2-7-4 6 1 9-4 8-10z" fill="#f9b63a" /><path d="M2 9a2.500 2.500 0 0 1 0-5c1-4 6-4 6.500 0 3 0 3 5 0 5z" fill="#c6ddf5" /><path d="M9 16a2 2 0 0 1 0-4c1-2.500 4-2.500 5 0 3 0 3 4 0 4z" fill="#e2edf9" /></Icon>
        16°C  晴れ時々くもり
      </Weather>
      <TrayIcons>
        <TrayIcon><Chevron up /></TrayIcon>
        <TrayIcon><Icon w={9} h={12} box="0 0 9 12" sw={0.9} stroke="#fff"><rect x=".5" y=".5" width="8" height="11" rx="4" fill="#0b7de4" stroke="none" /><path d="M2.500 4L6 7.500l-1.500 2v-7L6 4.500 2.500 8" /></Icon></TrayIcon>
        <TrayIcon><Icon w={12} box="0 0 12 12" stroke="none"><path d="M2 8a2 2 0 0 1 0-4c2-3 6-2 7 0l2 4z" fill="#ccc" /><circle cx="8.500" cy="8.500" r="3" fill="#d8232a" /><path d="M7.300 7.300l2.400 2.400M9.700 7.300L7.300 9.700" stroke="#fff" strokeWidth=".8" /></Icon></TrayIcon>
        <TrayIcon><Icon w={12} box="0 0 12 12" sw={1} stroke="#fff"><path d="M3.500 4.500h7v4h-7z" fill="#ddd" /><path d="M11.500 5.500v2M1 3v3h2V3M2 6v3" /></Icon></TrayIcon>
        <TrayIcon><Icon w={12} box="0 0 12 12" sw={1} stroke="#ddd"><path d="M3 2.500h8.500v6H3zM5 10.500h5M7.500 8.500v2M1 1v3M.5 4h2v3" /></Icon></TrayIcon>
        <TrayIcon><Icon w={12} box="0 0 12 12" sw={0.9} stroke="#ccc"><path d="M1 4.500h1.500L5 2v8L2.500 7.500H1zM7 4.500q1 1.500 0 3M8.500 3q2 3 0 6M10 2q3 4 0 8" /></Icon></TrayIcon>
        <TrayIcon>A</TrayIcon>
      </TrayIcons>
      <Clock>19:09<br />2023/03/15</Clock>
      <Notice aria-label="通知"><Icon w={12} box="0 0 12 12" sw={1}><path d="M.5 1h11v8h-2v2l-2-2h-7z" /><path d="M8 8h3" /></Icon></Notice>
    </Tray>
  </Taskbar>
);

export default function App() {
  return (
    <Screen>
      <Global />
      <Browser />
      <Editor />
      <SystemBar />
      <SettingsWindow />
      <Highlight />
    </Screen>
  );
}
